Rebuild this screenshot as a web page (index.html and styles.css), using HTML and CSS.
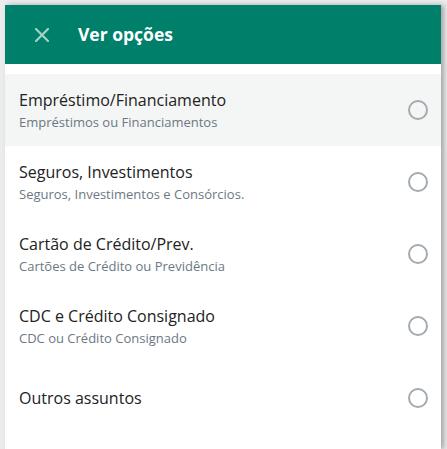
FILE: index.html
```html
<!DOCTYPE html>
<html lang="pt-BR">
<head>
  <meta charset="UTF-8">
  <meta name="viewport" content="width=device-width, initial-scale=1">
  <title>Ver opções</title>
  <link rel="stylesheet" href="styles.css">
</head>
<body>
  <div class="sheet">
    <div class="sheet-header">
      <button class="close" aria-label="Fechar">
        <svg width="14" height="14" viewBox="0 0 14 14">
          <path d="M1 1L13 13M13 1L1 13" stroke="currentColor" stroke-width="2.2" stroke-linecap="square"/>
        </svg>
      </button>
      <h1>Ver opções</h1>
    </div>

    <ul class="options">
      <li class="option active">
        <div class="option-text">
          <div class="option-title">Empréstimo/Financiamento</div>
          <div class="option-sub">Empréstimos ou Financiamentos</div>
        </div>
        <span class="radio"></span>
      </li>
      <li class="option">
        <div class="option-text">
          <div class="option-title">Seguros, Investimentos</div>
          <div class="option-sub">Seguros, Investimentos e Consórcios.</div>
        </div>
        <span class="radio"></span>
      </li>
      <li class="option">
        <div class="option-text">
          <div class="option-title">Cartão de Crédito/Prev.</div>
          <div class="option-sub">Cartões de Crédito ou Previdência</div>
        </div>
        <span class="radio"></span>
      </li>
      <li class="option">
        <div class="option-text">
          <div class="option-title">CDC e Crédito Consignado</div>
          <div class="option-sub">CDC ou Crédito Consignado</div>
        </div>
        <span class="radio"></span>
      </li>
      <li class="option">
        <div class="option-text">
          <div class="option-title">Outros assuntos</div>
        </div>
        <span class="radio"></span>
      </li>
    </ul>
  </div>
</body>
</html>
```

FILE: styles.css
```css
body {
  margin: 0;
  background: #ececec;
  font-family: 'Open Sans', 'Noto Sans', sans-serif;
  height: 449px;
  overflow: hidden;
}
.sheet {
  margin: 5px 6px 0 5px;
  background: #fff;
  height: 444px;
  box-shadow: 3px 0 5px rgba(0, 0, 0, 0.3);
}
.sheet-header {
  background: #00806b;
  height: 59px;
  display: flex;
  align-items: center;
  padding-left: 30px;
}
.close {
  background: none;
  border: none;
  padding: 0;
  width: 14px;
  height: 14px;
  color: #9fd3c6;
  display: flex;
  cursor: pointer;
}
.sheet-header h1 {
  margin: -1px 0 0 29px;
  color: #fff;
  font-size: 17.5px;
  font-weight: 700;
}
.options {
  list-style: none;
  margin: 10px 0 0;
  padding: 0;
}
.option {
  height: 72px;
  display: flex;
  align-items: center;
  justify-content: space-between;
  padding: 0 13px 0 14px;
}
.option.active {
  background: #f4f5f5;
}
.option-title {
  font-size: 16px;
  color: #222;
  line-height: 22px;
}
.option-sub {
  font-size: 13px;
  color: #6b7884;
  line-height: 18px;
  margin-top: 2px;
}
.radio {
  width: 16px;
  height: 16px;
  border: 2px solid #a2abb2;
  border-radius: 50%;
}
```
